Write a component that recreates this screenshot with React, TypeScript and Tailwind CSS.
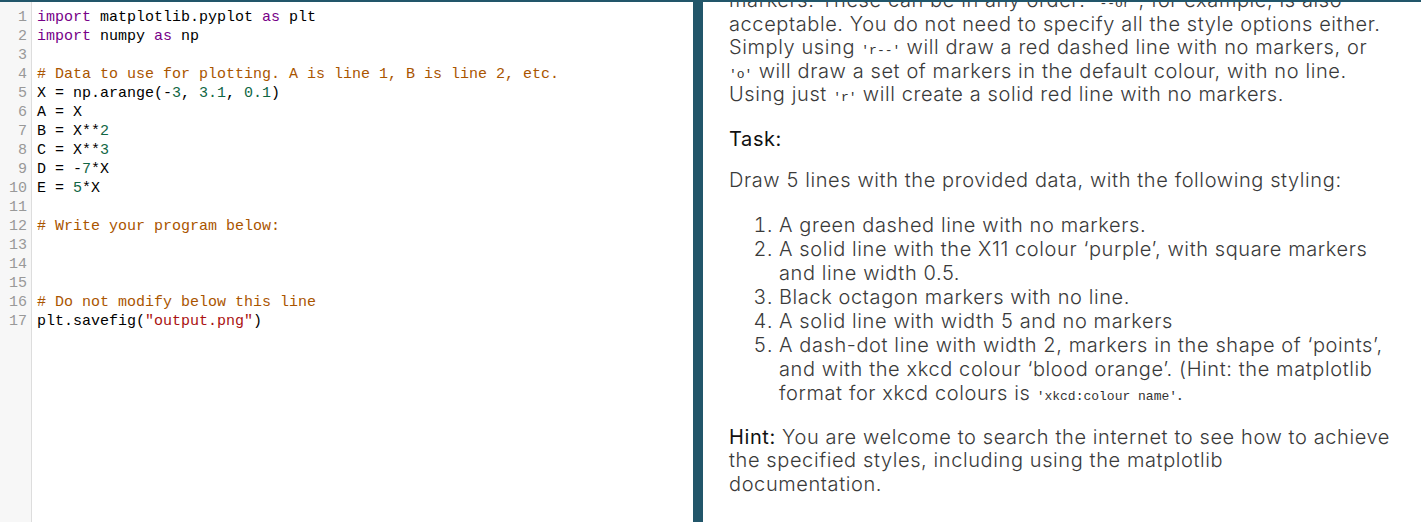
const code: { n: number; parts: [string, string][] }[] = [
  { n: 1, parts: [["kw", "import"], ["", " matplotlib.pyplot "], ["kw", "as"], ["", " plt"]] },
  { n: 2, parts: [["kw", "import"], ["", " numpy "], ["kw", "as"], ["", " np"]] },
  { n: 3, parts: [] },
  { n: 4, parts: [["cm", "# Data to use for plotting. A is line 1, B is line 2, etc."]] },
  { n: 5, parts: [["", "X = np.arange(-"], ["num", "3"], ["", ", "], ["num", "3.1"], ["", ", "], ["num", "0.1"], ["", ")"]] },
  { n: 6, parts: [["", "A = X"]] },
  { n: 7, parts: [["", "B = X**"], ["num", "2"]] },
  { n: 8, parts: [["", "C = X**"], ["num", "3"]] },
  { n: 9, parts: [["", "D = -"], ["num", "7"], ["", "*X"]] },
  { n: 10, parts: [["", "E = "], ["num", "5"], ["", "*X"]] },
  { n: 11, parts: [] },
  { n: 12, parts: [["cm", "# Write your program below:"]] },
  { n: 13, parts: [] },
  { n: 14, parts: [] },
  { n: 15, parts: [] },
  { n: 16, parts: [["cm", "# Do not modify below this line"]] },
  { n: 17, parts: [["", "plt.savefig("], ["str", '"output.png"'], ["", ")"]] },
];

const tokenClass: Record<string, string> = {
  kw: "text-[#770088]",
  cm: "text-[#aa5500]",
  num: "text-[#116644]",
  str: "text-[#aa1111]",
  "": "text-black",
};

function Code({ children }: { children: React.ReactNode }) {
  return (
    <code className="font-['Liberation_Mono',monospace] text-[13px] leading-none tracking-normal text-[#333]">
      {children}
    </code>
  );
}

export default function App() {
  return (
    <div className="flex h-[522px] w-[1421px] overflow-hidden border-t-2 border-[#22566a] bg-white">
      {/* editor */}
      <div className="flex w-[693px] bg-white font-['Liberation_Mono',monospace] text-[15px] leading-[19px]">
        <div className="w-[32px] shrink-0 border-r border-[#dddddd] bg-[#f7f7f7] pt-[6px] pr-[4px] text-right text-[#999999]">
          {code.map((l) => (
            <div key={l.n}>{l.n}</div>
          ))}
        </div>
        <div className="flex-1 whitespace-pre pt-[6px] pl-[5px]">
          {code.map((l) => (
            <div key={l.n} className="h-[19px]">
              {l.parts.map(([t, s], i) => (
                <span key={i} className={tokenClass[t]}>
                  {s}
                </span>
              ))}
            </div>
          ))}
        </div>
      </div>

      <div className="w-[10px] shrink-0 bg-[#22566a]" />

      {/* instructions */}
      <div className="flex-1 overflow-hidden whitespace-nowrap pl-[26px] font-['Inter',sans-serif] text-[20px] font-light leading-[23.5px] tracking-[0.6px] text-[#3a3a3a]">
        <div className="-mt-[13px]">
          <p>
            markers. These can be in any order: <Code>'--or'</Code>, for example, is also
            <br />
            acceptable. You do not need to specify all the style options either.
            <br />
            Simply using <Code>'r--'</Code> will draw a red dashed line with no markers, or
            <br />
            <Code>'o'</Code> will draw a set of markers in the default colour, with no line.
            <br />
            Using just <Code>'r'</Code> will create a solid red line with no markers.
          </p>
          <p className="mt-[21px] font-normal text-[#111]">Task:</p>
          <p className="mt-[18px]">Draw 5 lines with the provided data, with the following styling:</p>
          <ol className="mt-[20px] list-decimal pl-[50px] leading-[24px]">
            <li>A green dashed line with no markers.</li>
            <li>
              A solid line with the X11 colour ‘purple’, with square markers
              <br />
              and line width 0.5.
            </li>
            <li>Black octagon markers with no line.</li>
            <li>A solid line with width 5 and no markers</li>
            <li>
              A dash-dot line with width 2, markers in the shape of ‘points’,
              <br />
              and with the xkcd colour ‘blood orange’. (Hint: the matplotlib
              <br />
              format for xkcd colours is <Code>'xkcd:colour name'</Code>.
            </li>
          </ol>
          <p className="mt-[21px]">
            <span className="font-normal text-[#111]">Hint:</span> You are welcome to search the internet to see how to
            achieve
            <br />
            the specified styles, including using the matplotlib
            <br />
            documentation.
          </p>
        </div>
      </div>
    </div>
  );
}
